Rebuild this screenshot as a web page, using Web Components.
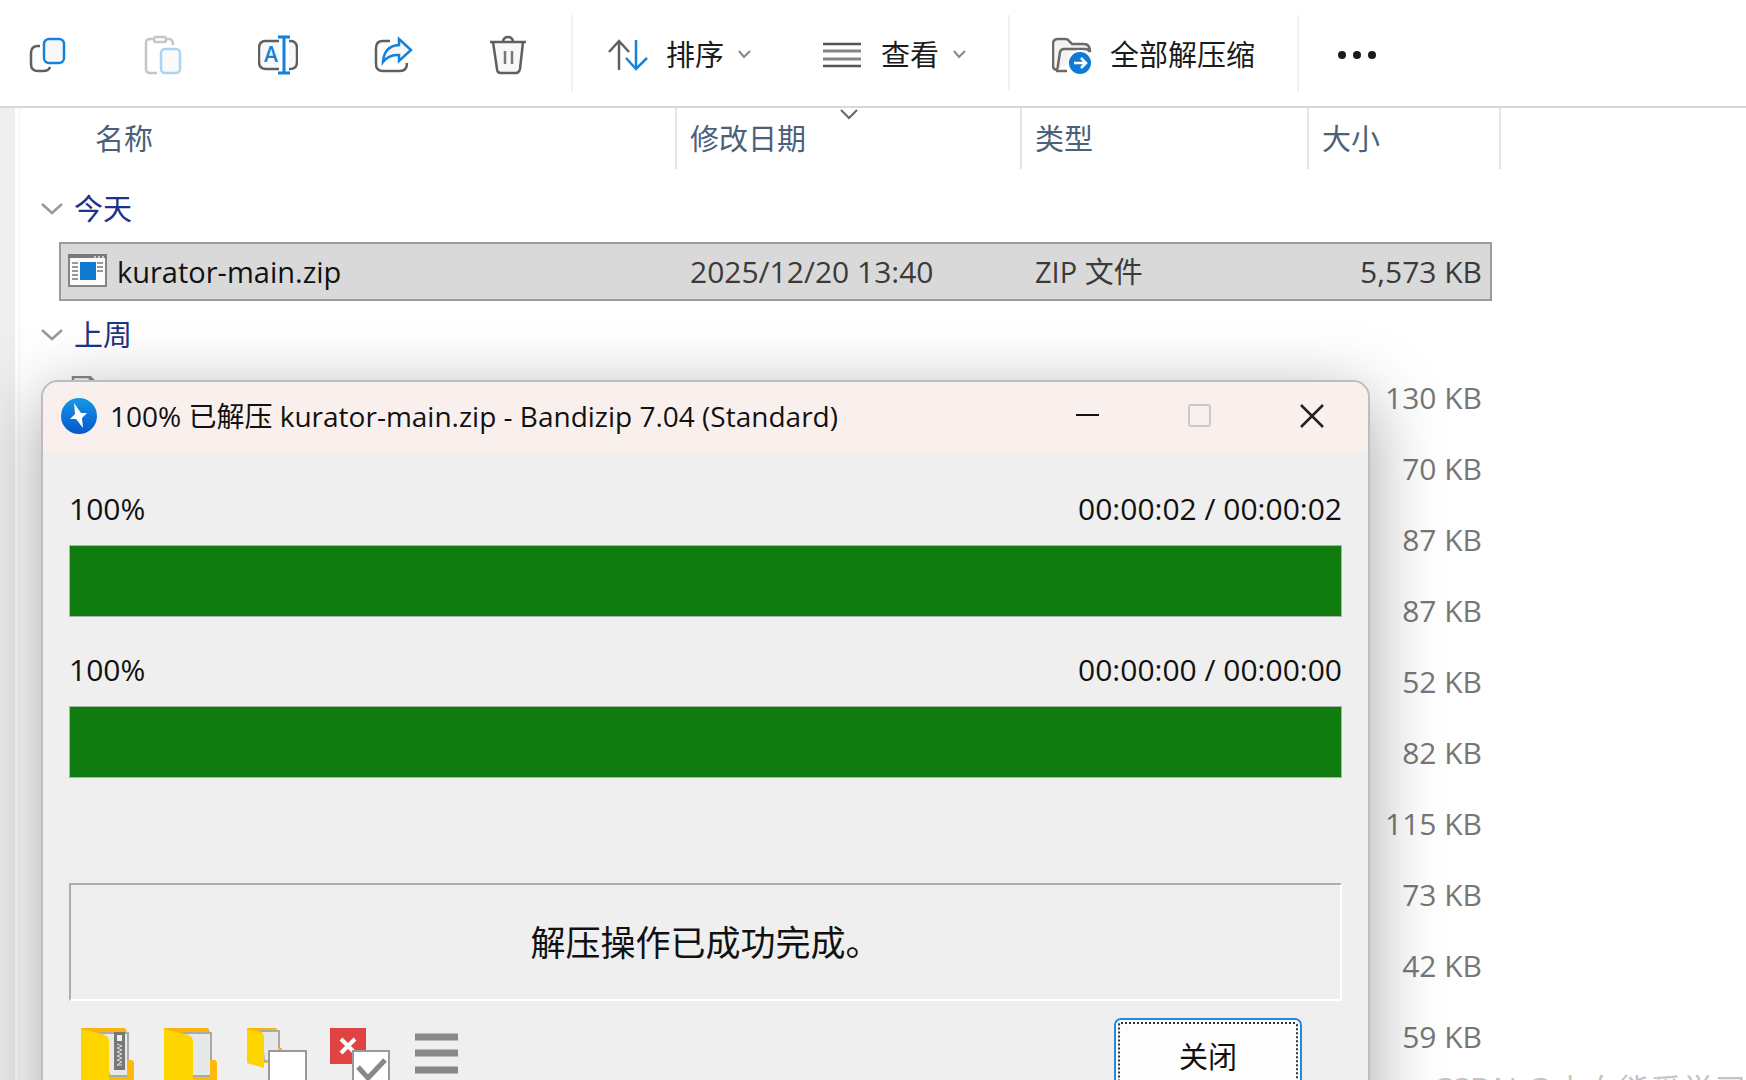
<!DOCTYPE html>
<html lang="zh-CN">
<head>
<meta charset="utf-8">
<title>kurator-main.zip</title>
<style>
  html, body {
    height: 100%;
    margin: 0;
  }
  body {
    overflow: hidden;
    background: #fff;
    font-family: "Open Sans", "Noto Sans CJK SC", sans-serif;
    font-size: 29px;
    line-height: 40px;
    color: #1b1b1b;
  }
</style>
</head>
<body>
<file-explorer>
  <tool-bar slot="toolbar">
    <tool-group class="actions">
      <tool-button icon="copy" name="复制"></tool-button>
      <tool-button icon="paste" name="粘贴" disabled></tool-button>
      <tool-button icon="rename" name="重命名"></tool-button>
      <tool-button icon="share" name="共享"></tool-button>
      <tool-button icon="trash" name="删除"></tool-button>
    </tool-group>
    <tool-group class="views">
      <tool-button icon="sort" menu>排序</tool-button>
      <tool-button icon="lines" menu>查看</tool-button>
    </tool-group>
    <tool-group>
      <tool-button icon="extract">全部解压缩</tool-button>
    </tool-group>
    <tool-group class="last">
      <tool-button icon="more" name="更多"></tool-button>
    </tool-group>
  </tool-bar>
  <file-table></file-table>
</file-explorer>

<progress-dialog caption="100% 已解压 kurator-main.zip - Bandizip 7.04 (Standard)">
  <progress-row percent="100" time="00:00:02 / 00:00:02"></progress-row>
  <progress-row percent="100" time="00:00:00 / 00:00:00"></progress-row>
  <span slot="message">解压操作已成功完成。</span>
</progress-dialog>

<water-mark>CSDN @小白熊爱学习</water-mark>

<script>
const GREY = "#5f5f5f";
const BLUE = "#1382dc";

/* name: [width, height, markup] */
const ICONS = {
  copy: [40, 40, `
    <path d="M12 11H10Q3 11 3 18V29Q3 36 10 36H15Q21 36 22 32" stroke="${GREY}"/>
    <rect x="16" y="4" width="20" height="24" rx="5" fill="#f8f8f8" stroke="${BLUE}"/>`],
  paste: [40, 40, `
    <path d="M11 4H7Q3 4 3 8V34Q3 38 7 38H14M23 4H26Q30 4 30 10" stroke="#c6c6c6"/>
    <rect x="11" y="2" width="12" height="5" rx="2" stroke="#c6c6c6"/>
    <rect x="18" y="14" width="19" height="24" rx="4" fill="#fafafa" stroke="#a9d5f5"/>`],
  rename: [40, 40, `
    <path d="M21 6H8Q1 6 1 13V27Q1 34 8 34H21M31 6H32Q39 6 39 13V27Q39 34 32 34H31" fill="#f8f8f8" stroke="${GREY}"/>
    <path d="M26 2V38M20 2H32M20 38H32" stroke="${BLUE}" stroke-width="3"/>
    <text x="13" y="27" text-anchor="middle" font-family="Open Sans" font-size="21" font-weight="600" fill="${BLUE}">A</text>`],
  share: [40, 40, `
    <path d="M17 6H10Q3 6 3 13V29Q3 36 10 36H27Q34 36 34 28" stroke="${GREY}"/>
    <path d="M26 4L38 15L26 26V20Q16 19 10 27Q11 11 26 10Z" fill="#f8f8f8" stroke="${BLUE}"/>`],
  trash: [40, 40, `
    <path d="M5 7L9 34Q9 38 13 38H28Q31 38 32 34L35 7" fill="#f8f8f8" stroke="${GREY}"/>
    <path d="M2 7H38M15 6Q16 2 20 2T25 6" stroke="${GREY}"/>
    <path d="M17 16V29M24 16V29" stroke="#777"/>`],
  sort: [40, 40, `
    <path d="M11 35V6M1 17L11 6L21 17" stroke="${GREY}"/>
    <path d="M28 5V34M18 23L28 34L39 23" stroke="${BLUE}"/>`],
  lines: [40, 40, `
    <path d="M0 9H38M0 31H38" stroke="#555"/>
    <path d="M0 16H38M0 24H38" stroke="#858585" stroke-width="3"/>`],
  extract: [40, 40, `
    <path d="M4 35Q1 34 1 31V9Q1 4 6 4H13Q16 4 17 6L20 9H32Q38 9 38 17M4 35Q6 34 6 30L8 17Q9 14 12 14H33Q37 14 38 17M4 36H15" fill="#f3f3f3" stroke="#6a6a6a"/>
    <circle cx="28" cy="28" r="13" fill="#fff"/>
    <circle cx="28" cy="28" r="11" fill="#0f7ad6"/>
    <path d="M22 28H34M29 23L34 28L29 33" stroke="#fff"/>`],
  more: [40, 40, `
    <g fill="#1b1b1b"><circle cx="5" cy="20" r="4"/><circle cx="20" cy="20" r="4"/><circle cx="35" cy="20" r="4"/></g>`],
  chevron: [13, 9, `<path d="M1 1L6 7L12 1" stroke="#888" stroke-width="2"/>`],
  sorted: [18, 11, `<path d="M1 1L9 9L17 1" stroke="#666" stroke-width="2"/>`],
  expanded: [22, 12, `<path d="M1 1L11 10L21 1" stroke="#999"/>`],
  app: [39, 36, `
    <rect x="1" y="1" width="37" height="31" fill="#fcfcfc" stroke="#85857f" stroke-width="2"/>
    <path d="M0 2H39" stroke="#7a7a76" stroke-width="4"/>
    <path d="M26 3H28M30 3H32M34 3H36" stroke="#ccc" stroke-width="2"/>
    <path d="M4 9H10M4 13H10M4 17H10M4 21H10M4 25H10M29 9H35M29 13H35M29 17H35" stroke="#999" stroke-width="2"/>
    <rect x="12" y="8" width="16" height="18" fill="#1079cf"/>`],
  file: [39, 44, `<path d="M5 1H22L28 7V43H5Z" fill="#fafafa" stroke="#8a8782"/><path d="M22 1V7H28" stroke="#8a8782"/>`],
  bandizip: [36, 36, `
    <defs><linearGradient id="b" x1="0" y1="0" x2="0" y2="1"><stop stop-color="#1498e6"/><stop offset="1" stop-color="#0556cc"/></linearGradient></defs>
    <circle cx="18" cy="18" r="18" fill="url(#b)"/>
    <path d="M13 5L20 15H26L21 20L22 30L15 21H9L14 16Z" fill="#fff"/>`],
  minimize: [24, 24, `<path d="M0 11H23" stroke="#111" stroke-width="2"/>`],
  maximize: [24, 24, `<rect x="1" y="1" width="21" height="21" rx="2" fill="#f6f1f0" stroke="#cdc9c8" stroke-width="2"/>`],
  close: [24, 24, `<path d="M1 1L23 23M23 1L1 23" stroke="#222"/>`],
  openArchive: [60, 60, `
    <path d="M0 1H44L46 5V52H0Z" fill="#fbb408"/>
    <path d="M20 6H47V49H28Z" fill="#e6e9ea" stroke="#aaa" stroke-width="2"/>
    <path d="M46 33H51L53 35V56H24V50H46Z" fill="#fdb90c"/>
    <path d="M0 2L20 7Q28 8 28 14V60L0 54Z" fill="#ffd500"/>
    <rect x="33" y="5" width="11" height="38" fill="#777"/>
    <rect x="36" y="8" width="5" height="6" fill="#eee"/>
    <path d="M36 17L41 19L36 21L41 23L36 25L41 27L36 29L41 31L36 33L41 35L36 38H41" stroke="#ddd" stroke-width="1"/>`],
  openFolder: [60, 60, `
    <path d="M0 1H44L46 5V52H0Z" fill="#fbb408"/>
    <path d="M20 6H47V49H28Z" fill="#e6e9ea" stroke="#aaa" stroke-width="2"/>
    <path d="M46 33H51L53 35V56H24V50H46Z" fill="#fdb90c"/>
    <path d="M0 2L20 7Q29 8 29 14V60L0 54Z" fill="#ffd500"/>`],
  autoOpen: [60, 60, `
    <path d="M0 1H29L31 4V36H0Z" fill="#fbb408"/>
    <path d="M14 4H32V34H17Z" fill="#e6e9ea" stroke="#aaa" stroke-width="2"/>
    <path d="M31 21H35V36H18V34H31Z" fill="#fdb90c"/>
    <path d="M0 2L13 5Q17 6 17 10V41L0 36Z" fill="#ffd500"/>
    <rect x="22" y="24" width="37" height="37" fill="#fff" stroke="#999" stroke-width="2"/>`],
  autoClose: [60, 60, `
    <rect x="0" y="1" width="36" height="36" fill="#e04344"/>
    <path d="M11 12L25 26M25 12L11 26" stroke="#fff" stroke-width="4"/>
    <rect x="23" y="24" width="36" height="37" fill="#fff" stroke="#999" stroke-width="2"/>
    <path d="M28 40L38 51L55 33" stroke="#888" stroke-width="5"/>`],
  options: [46, 60, `<path d="M2 10H45M2 26H45M2 43H45" stroke="#888" stroke-width="7"/>`],
};

const icon = (name) => {
  const [w, h, body] = ICONS[name];
  return `<svg width="${w}" height="${h}" viewBox="0 0 ${w} ${h}" fill="none" stroke-width="2.5" aria-hidden="true">${body}</svg>`;
};

const BUTTON_RESET = `
  button {
    margin: 0;
    padding: 0;
    border: 0;
    background: none;
    font: inherit;
    color: inherit;
  }
  svg { display: block; flex: none; }
`;

class BaseElement extends HTMLElement {
  constructor() {
    super();
    this.attachShadow({ mode: "open" });
  }

  connectedCallback() {
    this.shadowRoot.innerHTML = this.render();
  }
}

class FileExplorer extends BaseElement {
  render() {
    return `
      <style>
        :host { display: flex; flex-direction: column; height: 100%; overflow: hidden; }
        main { flex: 1; min-height: 0; display: flex; }
        .nav { width: 15px; background: #eee; border-right: 3px solid #fff; }
        .content { flex: 1; min-width: 0; padding-right: 245px; border-left: 3px solid #f9f9f9; }
      </style>
      <slot name="toolbar"></slot>
      <main>
        <div class="nav"></div>
        <div class="content"><slot></slot></div>
      </main>`;
  }
}

class ToolBar extends BaseElement {
  render() {
    return `
      <style>
        :host {
          display: flex;
          align-items: center;
          flex: none;
          box-sizing: border-box;
          height: 108px;
          border-bottom: 2px solid #d8d8d8;
        }
      </style>
      <slot></slot>`;
  }
}

class ToolGroup extends BaseElement {
  render() {
    return `
      <style>
        :host {
          display: flex;
          align-items: center;
          box-sizing: border-box;
          height: 76px;
          padding: 3px 42px 0;
          border-right: 2px solid #f0f0f0;
        }
        :host(.actions) { gap: 31px; padding-left: 6px; padding-right: 21px; }
        :host(.views) { gap: 72px; padding-left: 35px; }
        :host(.last) { padding-left: 38px; border: 0; }
      </style>
      <slot></slot>`;
  }
}

class ToolButton extends BaseElement {
  render() {
    const name = this.getAttribute("name");
    const menu = this.hasAttribute("menu");
    return `
      <style>
        ${BUTTON_RESET}
        :host { display: block; }
        button { display: flex; align-items: center; gap: 18px; height: 60px; white-space: nowrap; }
        .chevron { margin-left: -4px; }
        :host([name]) button { justify-content: center; }
        :host-context(.actions) button { width: 84px; }
      </style>
      <button type="button" ${name ? `aria-label="${name}"` : ""} ${this.hasAttribute("disabled") ? "disabled" : ""}>
        ${icon(this.getAttribute("icon"))}
        ${name ? "" : "<slot></slot>"}
        ${menu ? `<span class="chevron">${icon("chevron")}</span>` : ""}
      </button>`;
  }
}

class FileTable extends BaseElement {
  groups = [
    { title: "今天", files: [
      { icon: "app", name: "kurator-main.zip", date: "2025/12/20 13:40", type: "ZIP 文件", size: "5,573 KB", selected: true },
    ] },
    { title: "上周", files: ["130", "70", "87", "87", "52", "82", "115", "73", "42", "59"].map((kb) => (
      { icon: "file", name: "", date: "", type: "", size: `${kb} KB` }
    )) },
  ];

  renderFile(file) {
    return `
      <tr class="file ${file.selected ? "selected" : ""}">
        <td class="name">${icon(file.icon)}${file.name}</td>
        <td class="date">${file.date}</td>
        <td>${file.type}</td>
        <td class="size">${file.size}</td>
      </tr>`;
  }

  render() {
    return `
      <style>
        ${BUTTON_RESET}
        :host { display: block; }
        table, thead, tbody { display: block; }
        tr { display: grid; grid-template-columns: 1fr 345px 287px 192px; }
        th { font-weight: normal; text-align: left; }
        td { padding: 0; }

        thead th {
          position: relative;
          height: 61px;
          box-sizing: border-box;
          padding: 11px 13px 0;
          border-right: 2px solid #e4e4e4;
          color: #4c607a;
        }
        thead th:first-child { padding-left: 74px; }
        thead svg { position: absolute; top: 1px; left: calc(50% - 9px); }

        .group { display: flex; height: 67px; }
        .group th { display: flex; align-items: center; padding: 1px 0 0; }
        .group button { display: flex; align-items: center; gap: 11px; padding-left: 20px; color: #1e3287; }
        thead + tbody .group { margin-top: 6px; }

        .file {
          grid-template-columns: 1fr 345px 287px 183px;
          align-items: center;
          box-sizing: border-box;
          height: 59px;
          margin: 0 9px 12px 38px;
          color: #777;
        }
        .file:last-child { margin-bottom: 0; }
        .file td { padding-left: 13px; }
        .file .name { display: flex; align-items: center; gap: 10px; padding-left: 9px; }
        .file .date, .file .size { font-size: 30px; }
        .file .size { padding-right: 10px; text-align: right; }
        .selected { background: #d9d9d9; outline: 2px solid #9b9b9b; outline-offset: -2px; color: #3a3a3a; }
        .selected .name { color: #111; }
      </style>
      <table>
        <thead>
          <tr><th>名称</th><th>修改日期${icon("sorted")}</th><th>类型</th><th>大小</th></tr>
        </thead>
        ${this.groups.map((group) => `
          <tbody>
            <tr class="group"><th colspan="4"><button type="button" aria-expanded="true">${icon("expanded")}${group.title}</button></th></tr>
            ${group.files.map((file) => this.renderFile(file)).join("")}
          </tbody>`).join("")}
      </table>`;
  }
}

class ProgressRow extends BaseElement {
  render() {
    const percent = this.getAttribute("percent");
    return `
      <style>
        :host { display: block; }
        .labels { display: flex; justify-content: space-between; margin-bottom: 16px; font-size: 30px; }
        progress {
          display: block;
          box-sizing: border-box;
          width: 100%;
          height: 72px;
          border: 1px solid #a9b5a9;
          appearance: none;
          -webkit-appearance: none;
        }
        progress::-webkit-progress-bar { background: #e6e6e6; }
        progress::-webkit-progress-value { background: #107c10; }
      </style>
      <div class="labels"><label for="bar">${percent}%</label><span>${this.getAttribute("time")}</span></div>
      <progress id="bar" max="100" value="${percent}"></progress>`;
  }
}

class ProgressDialog extends BaseElement {
  render() {
    return `
      <style>
        ${BUTTON_RESET}
        :host {
          position: absolute;
          top: 380px;
          left: 41px;
          right: 376px;
          border: 2px solid #bdbdbd;
          box-sizing: border-box;
          border-radius: 17px;
          background: #efefef;
          box-shadow: 0 18px 72px rgba(0, 0, 0, .36);
          color: #111;
        }
        header {
          display: flex;
          align-items: center;
          box-sizing: border-box;
          height: 71px;
          padding: 0 44px 4px 18px;
          gap: 13px;
          border-radius: 15px 15px 0 0;
          background: #f9f0ee;
        }
        h1 { flex: 1; margin: 0; font-size: 28px; font-weight: normal; white-space: nowrap; }
        .window { display: flex; gap: 88px; }
        .body { padding: 36px 26px 0; }
        .bars { display: flex; flex-direction: column; gap: 33px; }
        .message {
          margin-top: 105px;
          padding: 33px 0 31px;
          border: 2px solid;
          border-color: #acacac #fff #fff #acacac;
          font-size: 35px;
          line-height: 50px;
          text-align: center;
        }
        footer { display: flex; align-items: flex-start; padding: 17px 40px 40px 12px; }
        .tools { flex: 1; display: flex; gap: 23px; padding-top: 9px; }
        .ok {
          width: 188px;
          height: 78px;
          border: 2px solid #2488dc;
          border-radius: 7px;
          background: #fdfdfd;
          outline: 2px dotted #333;
          outline-offset: -6px;
        }
      </style>
      <header>
        ${icon("bandizip")}
        <h1>${this.getAttribute("caption")}</h1>
        <div class="window">
          <button type="button" aria-label="最小化">${icon("minimize")}</button>
          <button type="button" aria-label="最大化" disabled>${icon("maximize")}</button>
          <button type="button" aria-label="关闭窗口">${icon("close")}</button>
        </div>
      </header>
      <div class="body">
        <div class="bars"><slot></slot></div>
        <div class="message"><slot name="message"></slot></div>
        <footer>
          <div class="tools">
            <button type="button" aria-label="打开压缩文件">${icon("openArchive")}</button>
            <button type="button" aria-label="打开文件夹">${icon("openFolder")}</button>
            <button type="button" aria-label="完成后打开文件夹">${icon("autoOpen")}</button>
            <button type="button" aria-label="完成后关闭">${icon("autoClose")}</button>
            <button type="button" aria-label="选项">${icon("options")}</button>
          </div>
          <button class="ok" type="button">关闭</button>
        </footer>
      </div>`;
  }
}

class WaterMark extends BaseElement {
  render() {
    return `
      <style>
        :host {
          position: absolute;
          right: 0;
          bottom: -30px;
          font-size: 32px;
          white-space: nowrap;
          color: #c4c4c4;
          pointer-events: none;
        }
      </style>
      <slot></slot>`;
  }
}

customElements.define("file-explorer", FileExplorer);
customElements.define("tool-bar", ToolBar);
customElements.define("tool-group", ToolGroup);
customElements.define("tool-button", ToolButton);
customElements.define("file-table", FileTable);
customElements.define("progress-row", ProgressRow);
customElements.define("progress-dialog", ProgressDialog);
customElements.define("water-mark", WaterMark);
</script>
</body>
</html>
